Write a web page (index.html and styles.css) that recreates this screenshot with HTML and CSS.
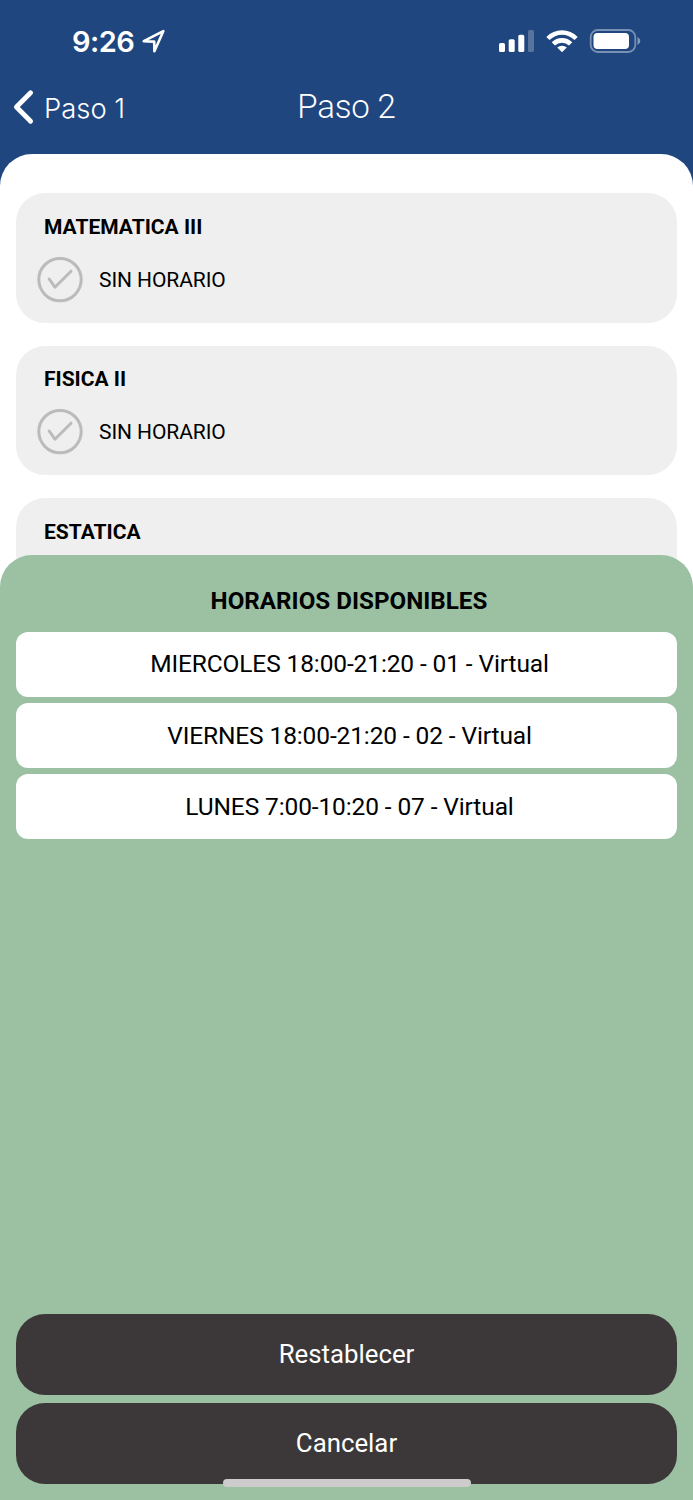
FILE: index.html
```html
<!DOCTYPE html>
<html lang="es">
<head>
<meta charset="utf-8">
<title>Paso 2</title>
<link rel="stylesheet" href="styles.css">
</head>
<body>
<div class="screen">
  <div class="status">
    <div class="clock"><span class="time">9:26</span>
      <svg class="location" width="24" height="24" viewBox="0 0 24 24" fill="none" stroke="#fff" stroke-width="2.6" stroke-linejoin="round"><path d="M1.8 12.2 21.3 2.2 12.4 22.2 12.2 12.6Z"/></svg>
    </div>
    <svg class="indicators" width="144" height="26" viewBox="0 0 144 26" fill="#fff">
      <rect x="1" y="15" width="6" height="9" rx="1.6"/>
      <rect x="10.7" y="11.2" width="6" height="12.8" rx="1.6"/>
      <rect x="20.3" y="6.8" width="6" height="17.2" rx="1.6"/>
      <rect x="30" y="2" width="6" height="22" rx="1.6" opacity=".25"/>
      <path d="M48.3 8.9a22 22 0 0 1 31.4 0l-3.2 3.2a17.5 17.5 0 0 0-25 0z"/>
      <path d="M53.7 14.2a14.6 14.6 0 0 1 20.6 0l-3.3 3.3a10 10 0 0 0-14 0z"/>
      <path d="M59.2 19.6a7 7 0 0 1 9.6 0L64 24.3z"/>
      <rect x="92.7" y="2" width="44.6" height="22" rx="7" fill="none" stroke="#fff" stroke-width="1.8" opacity=".4"/>
      <rect x="95.5" y="5" width="35.5" height="16" rx="4"/>
      <path d="M139.5 9q2.8 1.3 2.8 4t-2.8 4z" opacity=".45"/>
    </svg>
  </div>
  <header class="nav">
    <a class="back"><svg width="24" height="38" viewBox="0 0 24 38" fill="none" stroke="#fff" stroke-width="4.8" stroke-linecap="round" stroke-linejoin="round"><path d="M18.6 4.8 4.4 19 18.6 33.2"/></svg><span class="back-label">Paso 1</span></a>
    <h1 class="title">Paso 2</h1>
  </header>
  <main class="courses">
    <section class="course">
      <h2 class="course-name">MATEMATICA III</h2>
      <div class="choice"><svg width="46" height="46" viewBox="0 0 46 46" fill="none" stroke="#bbb" stroke-width="3"><circle cx="23" cy="22.6" r="21.2"/><path d="M12.2 22 17.9 30.2 34 14.2" stroke-linecap="round" stroke-linejoin="round"/></svg><span>SIN HORARIO</span></div>
    </section>
    <section class="course">
      <h2 class="course-name">FISICA II</h2>
      <div class="choice"><svg width="46" height="46" viewBox="0 0 46 46" fill="none" stroke="#bbb" stroke-width="3"><circle cx="23" cy="22.6" r="21.2"/><path d="M12.2 22 17.9 30.2 34 14.2" stroke-linecap="round" stroke-linejoin="round"/></svg><span>SIN HORARIO</span></div>
    </section>
    <section class="course">
      <h2 class="course-name">ESTATICA</h2>
    </section>
  </main>
  <aside class="sheet">
    <h2 class="sheet-title">HORARIOS DISPONIBLES</h2>
    <div class="options">
      <button class="option">MIERCOLES 18:00-21:20 - 01 - Virtual</button>
      <button class="option">VIERNES 18:00-21:20 - 02 - Virtual</button>
      <button class="option">LUNES 7:00-10:20 - 07 - Virtual</button>
    </div>
    <div class="actions">
      <button class="action">Restablecer</button>
      <button class="action">Cancelar</button>
    </div>
  </aside>
  <div class="home-bar"></div>
</div>
</body>
</html>
```
FILE: styles.css
```css
* { box-sizing: border-box; }
body { margin: 0; font-family: Roboto, sans-serif; color: #000; }
h1, h2 { margin: 0; }
button { border: 0; padding: 0; font-family: inherit; }
svg { display: block; flex: none; }
.screen { position: relative; height: 1500px; overflow: hidden; background: #1f467f; display: flex; flex-direction: column; }
.status { height: 82px; flex: none; display: flex; justify-content: space-between; align-items: center; padding: 0 51px 0 72px; }
.clock { display: flex; align-items: center; gap: 8px; }
.time { font: 600 29px/36px Inter, sans-serif; letter-spacing: -.5px; color: #fff; padding-top: 2px; }
.nav { height: 72px; flex: none; display: grid; grid-template-columns: 1fr auto 1fr; align-items: start; padding: 6px 12px 0; color: #fff; }
.back { display: flex; align-items: center; gap: 8px; }
.back-label { font: 350 27.4px/36px Inter, sans-serif; padding-top: 2px; }
.title { font: 350 33px/38px Roboto, sans-serif; letter-spacing: -.15px; }
.courses { flex: 1; background: #fff; border-radius: 32px 32px 0 0; padding: 39px 16px 0; display: flex; flex-direction: column; gap: 23px; }
.course { height: 129.7px; flex: none; background: #efefef; border-radius: 29px; padding: 20.7px 21px 0; }
.course-name { font-size: 21px; line-height: 26px; font-weight: 700; padding-left: 7px; }
.choice { display: flex; align-items: center; gap: 16px; padding-top: 17px; font-size: 21px; line-height: 46px; letter-spacing: -.08px; }
.sheet { position: absolute; inset: 555px 0 0; background: #9bc0a2; border-radius: 32px 32px 0 0; padding: 30px 16px 16.5px; display: flex; flex-direction: column; }
.sheet-title { font-size: 24.2px; line-height: 32px; text-align: center; padding-left: 5px; }
.options { display: grid; gap: 6.5px; padding-top: 15px; }
.option { height: 64.7px; background: #fff; border-radius: 12px; font-size: 24.5px; letter-spacing: -.12px; padding: 0 0 1px 6px; color: #000; }
.actions { display: grid; gap: 8px; margin-top: auto; }
.action { height: 81px; background: #3c3839; border-radius: 29px; color: #fff; font-size: 25.8px; }
.home-bar { position: absolute; left: 223px; bottom: 13px; width: 248px; height: 8px; border-radius: 4px; background: #cdcbcc; }
```
